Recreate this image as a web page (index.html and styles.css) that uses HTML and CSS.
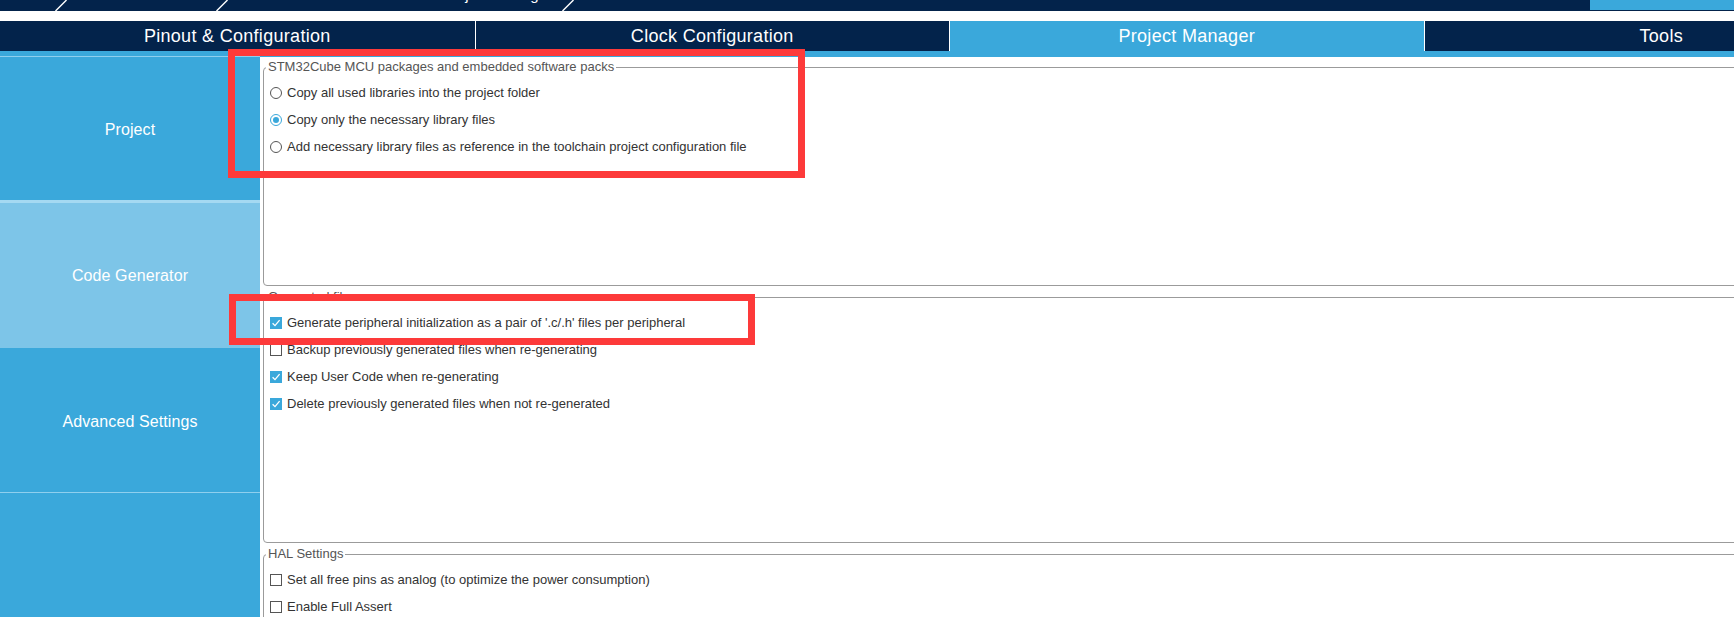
FILE: index.html
```html
<!DOCTYPE html>
<html lang="en">
<head>
<meta charset="utf-8">
<title>Project Manager</title>
<link rel="stylesheet" href="styles.css">
</head>
<body>
<div class="app">
  <div class="topbar">
    <div class="crumb c1"></div>
    <svg class="slash" width="12" height="11" viewBox="0 0 12 11"><line x1="0.5" y1="11" x2="11.5" y2="0" stroke="#ffffff" stroke-width="1.4"/></svg>
    <div class="crumb c2"></div>
    <svg class="slash" width="12" height="11" viewBox="0 0 12 11"><line x1="0.5" y1="11" x2="11.5" y2="0" stroke="#ffffff" stroke-width="1.4"/></svg>
    <div class="crumb c3"><span>test.ioc - Project Manager</span></div>
    <svg class="slash" width="12" height="11" viewBox="0 0 12 11"><line x1="0.5" y1="11" x2="11.5" y2="0" stroke="#ffffff" stroke-width="1.4"/></svg>
    <div class="topfill"></div>
    <div class="topbtn"></div>
  </div>
  <div class="whiteband"></div>
  <div class="tabs">
    <div class="tab">Pinout &amp; Configuration</div>
    <div class="tab sep">Clock Configuration</div>
    <div class="tab sep active">Project Manager</div>
    <div class="tab sep">Tools</div>
  </div>
  <div class="strip"></div>
  <div class="main">
    <nav class="sidebar">
      <div class="nav-item first">Project</div>
      <div class="nav-item current">Code Generator</div>
      <div class="nav-item after">Advanced Settings</div>
      <div class="nav-item last"></div>
    </nav>
    <div class="content">
      <fieldset class="group g1">
        <legend>STM32Cube MCU packages and embedded software packs</legend>
        <div class="opts o1">
          <label class="row"><span class="radio"></span><span>Copy all used libraries into the project folder</span></label>
          <label class="row"><span class="radio on"></span><span>Copy only the necessary library files</span></label>
          <label class="row"><span class="radio"></span><span>Add necessary library files as reference in the toolchain project configuration file</span></label>
        </div>
      </fieldset>
      <fieldset class="group g2">
        <legend>Generated files</legend>
        <div class="opts o2">
          <label class="row"><span class="check on"><svg width="12" height="12" viewBox="0 0 12 12"><path d="M2.6 6.2 L5 8.6 L9.6 3.2" fill="none" stroke="#ffffff" stroke-width="1.3"/></svg></span><span>Generate peripheral initialization as a pair of '.c/.h' files per peripheral</span></label>
          <label class="row"><span class="check"></span><span>Backup previously generated files when re-generating</span></label>
          <label class="row"><span class="check on"><svg width="12" height="12" viewBox="0 0 12 12"><path d="M2.6 6.2 L5 8.6 L9.6 3.2" fill="none" stroke="#ffffff" stroke-width="1.3"/></svg></span><span>Keep User Code when re-generating</span></label>
          <label class="row"><span class="check on"><svg width="12" height="12" viewBox="0 0 12 12"><path d="M2.6 6.2 L5 8.6 L9.6 3.2" fill="none" stroke="#ffffff" stroke-width="1.3"/></svg></span><span>Delete previously generated files when not re-generated</span></label>
        </div>
      </fieldset>
      <fieldset class="group g3">
        <legend>HAL Settings</legend>
        <div class="opts o3">
          <label class="row"><span class="check"></span><span>Set all free pins as analog (to optimize the power consumption)</span></label>
          <label class="row"><span class="check"></span><span>Enable Full Assert</span></label>
        </div>
      </fieldset>
    </div>
  </div>
  <div class="mark mark1"></div>
  <div class="mark mark2"></div>
</div>
</body>
</html>
```
FILE: styles.css
```css
html, body {
  margin: 0;
  padding: 0;
  background: #ffffff;
  overflow: hidden;
}
.app {
  position: relative;
  width: 1734px;
  height: 617px;
  overflow: hidden;
  font-family: "Liberation Sans", Arial, sans-serif;
}
.topbar {
  height: 11px;
  background: #03234b;
  display: flex;
  overflow: hidden;
}
.crumb {
  flex: 0 0 auto;
  overflow: hidden;
  height: 11px;
  color: #ffffff;
  font-size: 15px;
  line-height: 15px;
  text-align: right;
  white-space: nowrap;
}
.crumb span {
  display: block;
  margin-top: -13px;
  padding-right: 10px;
}
.c1 { width: 55px; }
.c2 { width: 149px; }
.c3 { width: 334px; }
.slash { flex: 0 0 12px; display: block; }
.topfill { flex: 1; }
.topbtn {
  flex: 0 0 144px;
  height: 10px;
  background: #3aa8db;
}
.whiteband {
  height: 10px;
  background: #ffffff;
}
.tabs {
  height: 30px;
  display: flex;
  background: #03234b;
  overflow: hidden;
}
.tab {
  flex: 0 0 474.5px;
  box-sizing: border-box;
  text-align: center;
  line-height: 30px;
  font-size: 18px;
  letter-spacing: 0.3px;
  color: #ffffff;
  white-space: nowrap;
}
.tab.sep { border-left: 1px solid #ffffff; }
.tab.active { background: #3aa8db; }
.strip {
  height: 5px;
  background: #3aa8db;
}
.main {
  display: flex;
  height: 561px;
}
.sidebar {
  flex: 0 0 260px;
  background: #3aa8db;
  display: flex;
  flex-direction: column;
}
.nav-item {
  display: flex;
  align-items: center;
  justify-content: center;
  color: #ffffff;
  font-size: 16px;
  letter-spacing: 0.1px;
}
.nav-item.first {
  height: 141px;
  padding-top: 2px;
  border-top: 1px solid #8fcfee;
}
.nav-item.current {
  height: 145px;
  border-top: 3px solid #a4d9f2;
  background: #7dc5e8;
}
.nav-item.after {
  height: 141px;
  padding-top: 3px;
}
.nav-item.last {
  flex: 1;
  border-top: 1px solid #8fcfee;
}
.content {
  flex: 1;
  min-width: 0;
  overflow: hidden;
  padding-left: 3px;
  border-top: 1px solid #3aa8db;
}
.group {
  margin: 4px 0 0 0;
  padding: 0;
  border: 1px solid #9b9b9b;
  border-radius: 4px;
  width: calc(100% + 30px);
  min-width: 0;
  box-sizing: border-box;
}
.group.g1 { margin-top: 3px; }
.group legend {
  margin-left: 2px;
  padding: 0 2px;
  font-size: 13px;
  line-height: 14px;
  color: #555555;
}
.opts {
  box-sizing: border-box;
  padding-top: 5px;
}
.o1 { height: 211px; }
.o2 { height: 238px; }
.o3 { height: 80px; }
.row {
  display: flex;
  align-items: center;
  gap: 5px;
  height: 27px;
  padding-left: 6px;
  font-size: 13px;
  color: #333333;
  white-space: nowrap;
}
.radio {
  flex: 0 0 auto;
  box-sizing: border-box;
  width: 12px;
  height: 12px;
  border: 1px solid #555555;
  border-radius: 50%;
  background: #ffffff;
  position: relative;
}
.radio.on {
  border-color: #3aa8db;
}
.radio.on::after {
  content: "";
  position: absolute;
  left: 2px;
  top: 2px;
  width: 6px;
  height: 6px;
  border-radius: 50%;
  background: #3aa8db;
}
.check {
  flex: 0 0 auto;
  box-sizing: border-box;
  width: 12px;
  height: 12px;
  border: 1px solid #555555;
  background: #ffffff;
  display: flex;
}
.check.on {
  border: none;
  background: #3aa8db;
}
.check svg { display: block; }
.mark {
  position: absolute;
  box-sizing: border-box;
  border: 7px solid #fd3a3a;
  pointer-events: none;
}
.mark1 {
  left: 228px;
  top: 49px;
  width: 577px;
  height: 129px;
}
.mark2 {
  left: 229px;
  top: 294px;
  width: 526px;
  height: 51px;
}
```
